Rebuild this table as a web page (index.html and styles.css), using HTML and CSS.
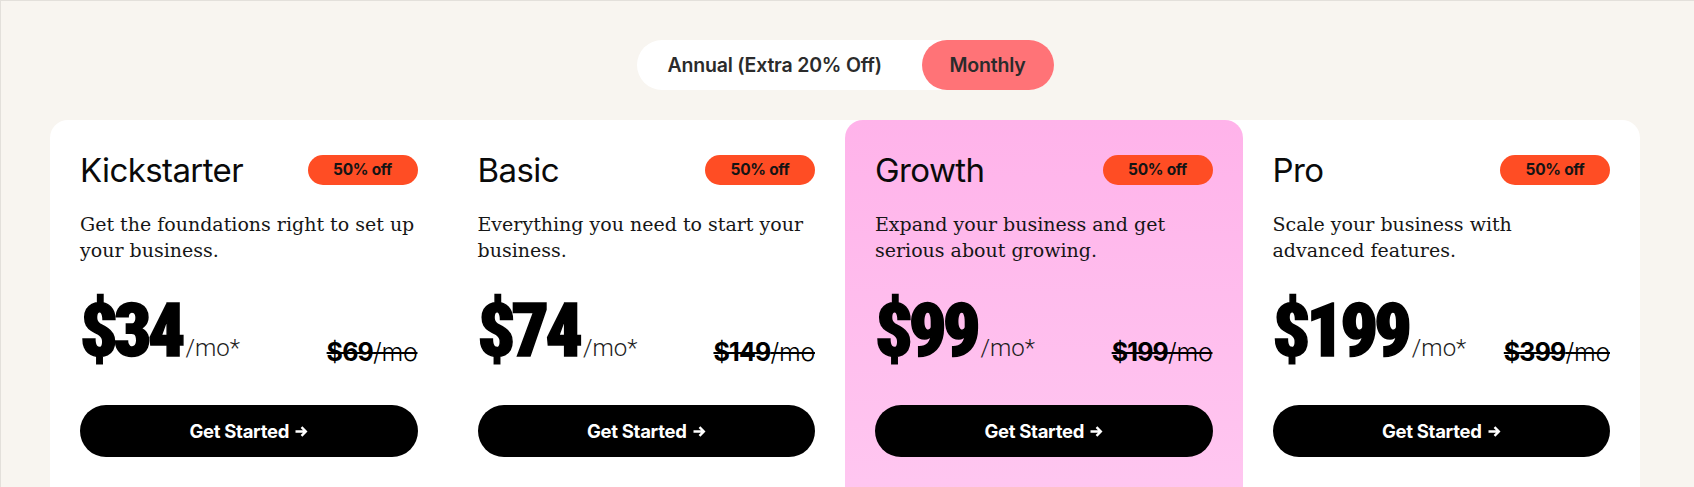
FILE: index.html
```html
<!DOCTYPE html>
<html lang="en">
<head>
<meta charset="utf-8">
<title>Pricing</title>
<link rel="stylesheet" href="styles.css">
</head>
<body>
<div class="page">
  <div class="toggle-wrap">
    <div class="toggle">
      <button class="opt">Annual (Extra 20% Off)</button>
      <button class="opt active">Monthly</button>
    </div>
  </div>

  <div class="plans">
    <div class="plan">
      <div class="plan-head"><h3 class="plan-name">Kickstarter</h3><span class="badge">50% off</span></div>
      <p class="desc">Get the foundations right to set up your business.</p>
      <div class="price-row">
        <div class="price"><span class="amount">$34</span><span class="per">/mo*</span></div>
        <div class="old"><span class="old-amount">$69</span><span class="old-per">/mo</span></div>
      </div>
      <a class="cta" href="#">Get Started <svg class="arrow" viewBox="0 0 13 11" width="13" height="11"><path d="M0.5 5.5H11M6.5 1.2l4.3 4.3-4.3 4.3"/></svg></a>
    </div>

    <div class="plan">
      <div class="plan-head"><h3 class="plan-name">Basic</h3><span class="badge">50% off</span></div>
      <p class="desc">Everything you need to start your business.</p>
      <div class="price-row">
        <div class="price"><span class="amount">$74</span><span class="per">/mo*</span></div>
        <div class="old"><span class="old-amount">$149</span><span class="old-per">/mo</span></div>
      </div>
      <a class="cta" href="#">Get Started <svg class="arrow" viewBox="0 0 13 11" width="13" height="11"><path d="M0.5 5.5H11M6.5 1.2l4.3 4.3-4.3 4.3"/></svg></a>
    </div>

    <div class="plan featured">
      <div class="plan-head"><h3 class="plan-name">Growth</h3><span class="badge">50% off</span></div>
      <p class="desc">Expand your business and get serious about growing.</p>
      <div class="price-row">
        <div class="price"><span class="amount">$99</span><span class="per">/mo*</span></div>
        <div class="old"><span class="old-amount">$199</span><span class="old-per">/mo</span></div>
      </div>
      <a class="cta" href="#">Get Started <svg class="arrow" viewBox="0 0 13 11" width="13" height="11"><path d="M0.5 5.5H11M6.5 1.2l4.3 4.3-4.3 4.3"/></svg></a>
    </div>

    <div class="plan">
      <div class="plan-head"><h3 class="plan-name">Pro</h3><span class="badge">50% off</span></div>
      <p class="desc">Scale your business with advanced features.</p>
      <div class="price-row">
        <div class="price"><span class="amount">$199</span><span class="per">/mo*</span></div>
        <div class="old"><span class="old-amount">$399</span><span class="old-per">/mo</span></div>
      </div>
      <a class="cta" href="#">Get Started <svg class="arrow" viewBox="0 0 13 11" width="13" height="11"><path d="M0.5 5.5H11M6.5 1.2l4.3 4.3-4.3 4.3"/></svg></a>
    </div>
  </div>
</div>
</body>
</html>
```

FILE: styles.css
```css
html, body {
  margin: 0;
  padding: 0;
}

body {
  background: #f8f5f0;
  font-family: Inter, "Liberation Sans", sans-serif;
  color: #0b0b0b;
  overflow: hidden;
}

.page {
  box-sizing: border-box;
  min-height: 487px;
  border-top: 1px solid #e3e0db;
  border-left: 1px solid #e3e0db;
  padding: 39px 54px 0 49px;
}

.toggle-wrap {
  display: flex;
  justify-content: center;
}

.toggle {
  display: flex;
  justify-content: space-between;
  width: 417px;
  height: 50px;
  background: #ffffff;
  border-radius: 25px;
}

.opt {
  border: 0;
  background: none;
  padding: 0 31px;
  border-radius: 25px;
  font-family: Inter, "Liberation Sans", sans-serif;
  font-weight: 600;
  font-size: 19.5px;
  line-height: 50px;
  color: #2b2b2b;
  letter-spacing: -0.2px;
  cursor: pointer;
}

.opt.active {
  width: 132px;
  padding: 0;
  background: #ff7377;
}

.plans {
  margin-top: 30px;
  display: grid;
  grid-template-columns: repeat(4, 1fr);
  background: #ffffff;
  border-radius: 18px;
  height: 420px;
}

.plan {
  padding: 35px 30px 0 30px;
}

.plan.featured {
  background: linear-gradient(180deg, #ffb3ea 0%, #ffc9f1 100%);
  border-radius: 18px 18px 0 0;
}

.plan-head {
  display: flex;
  align-items: center;
  justify-content: space-between;
  height: 30px;
}

.plan-name {
  margin: 0;
  font-weight: 400;
  font-size: 33px;
  line-height: 30px;
  letter-spacing: -0.6px;
  color: #0a0a0a;
}

.badge {
  width: 110px;
  height: 30px;
  border-radius: 15px;
  background: #ff4d24;
  text-align: center;
  font-weight: 700;
  font-size: 15.5px;
  line-height: 30px;
  letter-spacing: -0.3px;
  color: #141414;
}

.desc {
  max-width: 335px;
  margin: 26px 0 0 0;
  font-family: "DejaVu Serif", serif;
  font-size: 19px;
  line-height: 26px;
  color: #161616;
}

.price-row {
  margin-top: 30px;
  height: 76px;
  display: flex;
  align-items: flex-end;
  justify-content: space-between;
}

.price {
  display: flex;
  align-items: baseline;
  white-space: nowrap;
}

.amount {
  font-family: "Roboto Condensed", "Liberation Sans Narrow", "DejaVu Sans Condensed", sans-serif;
  font-weight: 900;
  font-size: 74px;
  line-height: 76px;
  letter-spacing: -4px;
  -webkit-text-stroke: 1.5px #000;
  color: #000;
}

.per {
  margin-left: 4px;
  font-family: Roboto, "Liberation Sans", sans-serif;
  font-weight: 300;
  font-size: 24px;
  line-height: 24px;
  color: #1c1c1c;
}

.old {
  margin-bottom: 4px;
  font-size: 25px;
  line-height: 25px;
  white-space: nowrap;
  text-decoration: line-through;
  text-decoration-thickness: 2px;
  color: #000;
}

.old-amount {
  font-weight: 700;
  letter-spacing: -0.8px;
}

.old-per {
  font-weight: 300;
  letter-spacing: -0.3px;
}

.cta {
  margin-top: 36px;
  height: 52px;
  display: flex;
  align-items: center;
  justify-content: center;
  gap: 6px;
  background: #000;
  border-radius: 26px;
  color: #fff;
  text-decoration: none;
  font-weight: 700;
  font-size: 18.5px;
  letter-spacing: -0.3px;
}

.arrow {
  fill: none;
  stroke: #fff;
  stroke-width: 2.4;
}
```
